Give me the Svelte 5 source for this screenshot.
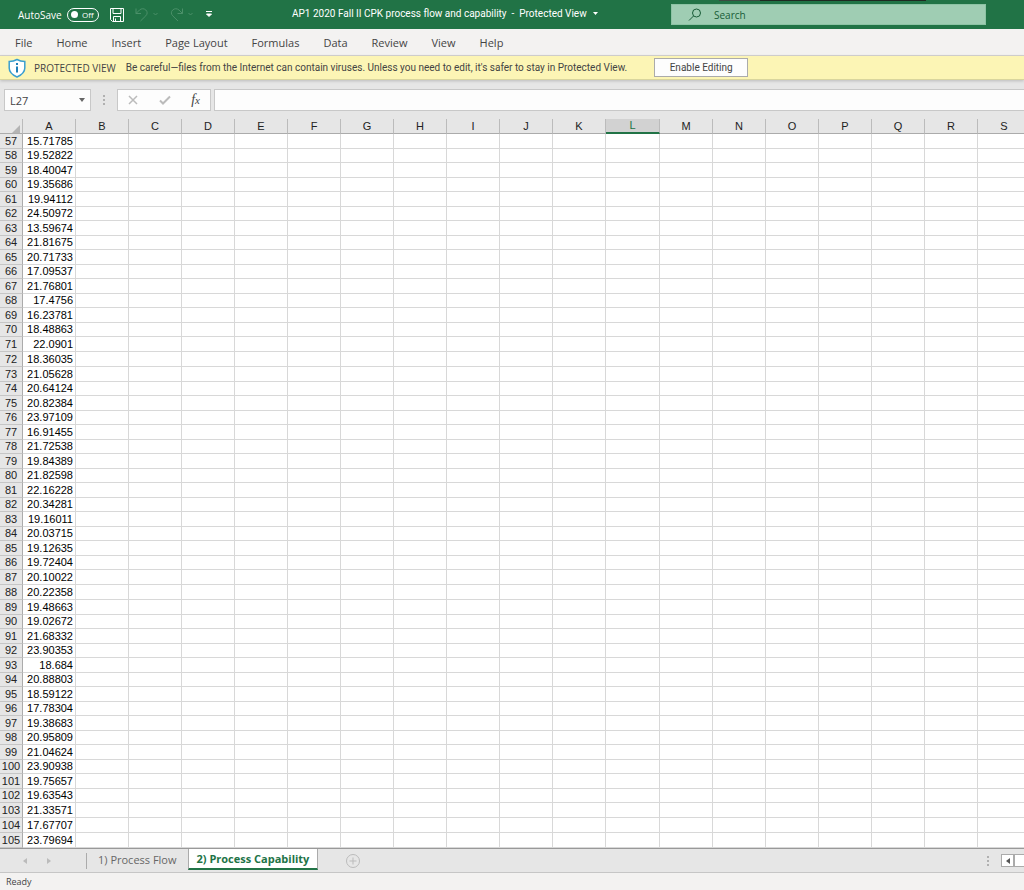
<script>
    const menus = ['File', 'Home', 'Insert', 'Page Layout', 'Formulas', 'Data', 'Review', 'View', 'Help'];
    const columns = 'ABCDEFGHIJKLMNOPQRS'.split('');
    const firstRow = 57;
    const values = [
        15.71785, 19.52822, 18.40047, 19.35686, 19.94112, 24.50972, 13.59674,
        21.81675, 20.71733, 17.09537, 21.76801, 17.4756, 16.23781, 18.48863,
        22.0901, 18.36035, 21.05628, 20.64124, 20.82384, 23.97109, 16.91455,
        21.72538, 19.84389, 21.82598, 22.16228, 20.34281, 19.16011, 20.03715,
        19.12635, 19.72404, 20.10022, 20.22358, 19.48663, 19.02672, 21.68332,
        23.90353, 18.684, 20.88803, 18.59122, 17.78304, 19.38683, 20.95809,
        21.04624, 23.90938, 19.75657, 19.63543, 21.33571, 17.67707, 23.79694
    ];
    const sheets = ['1) Process Flow', '2) Process Capability'];

    let selectedColumn = $state('L');
    let activeSheet = $state(1);
    let autoSave = $state(false);
    let cellName = $state('L27');
    let formula = $state('');
    let search = $state('');
    let showMessage = $state(true);
</script>

<div class="window">
    <header class="title-bar">
        <div class="quick-access">
            <label class="autosave">
                AutoSave
                <input type="checkbox" bind:checked={autoSave} />
                <span class="switch"><i></i>{autoSave ? 'On' : 'Off'}</span>
            </label>
            <button class="save" aria-label="Save">
                <svg width="14" height="14" viewBox="0 0 14 14">
                    <path d="M.5.5h13v13H2.5l-2-2zM3 .5v5h8v-5M3.5 13.500V8.500h7v5M5.500 13V10.500" />
                </svg>
            </button>
            <button class="faded" aria-label="Undo">
                <svg width="24" height="14" viewBox="0 0 24 14">
                    <path d="M1 .5v5h5M1 5.500L4.500 2C6.500.3 9 .3 10.800 2s1.800 4 0 5.800L5.500 13" />
                    <path d="M18.500 5l2 2 2-2" />
                </svg>
            </button>
            <button class="faded" aria-label="Redo">
                <svg width="24" height="14" viewBox="0 0 24 14">
                    <path d="M12.500.5v5h-5M12.500 5.500L9 2C7 .3 4.500.3 2.700 2s-1.800 4 0 5.800L8 13" />
                    <path d="M18.500 5l2 2 2-2" />
                </svg>
            </button>
            <button class="customize" aria-label="Customize Quick Access Toolbar">
                <svg width="8" height="7" viewBox="0 0 8 7">
                    <path d="M1 .5h6M1.500 3L4 5.500 6.500 3z" />
                </svg>
            </button>
        </div>
        <button class="doc-title">
            AP1 2020 Fall II CPK process flow and capability&nbsp; -&nbsp; Protected View
            <svg width="5" height="3" viewBox="0 0 5 3"><path d="M0 0h5L2.500 3z" /></svg>
        </button>
        <div class="search">
            <svg width="14" height="14" viewBox="0 0 14 14">
                <circle cx="8.500" cy="5" r="4" />
                <path d="M5.500 8L1 12.500" />
            </svg>
            <input type="text" placeholder="Search" aria-label="Search" bind:value={search} />
        </div>
        <span class="edge"></span>
    </header>

    <nav class="ribbon">
        {#each menus as menu}
            <button>{menu}</button>
        {/each}
    </nav>

    {#if showMessage}
        <div class="message-bar">
            <svg class="shield" width="18" height="20" viewBox="0 0 18 20">
                <path d="M9 1.500C6.500 3 4 3.500 1.200 3.500V10c0 4 3.300 7 7.800 9 4.500-2 7.800-5 7.800-9V3.500C14 3.500 11.500 3 9 1.500z" fill="#fff" stroke="#3a9fd0" stroke-width="1.500" />
                <path d="M9 8.500v6M9 5v2" stroke="#1e7fb8" stroke-width="2" />
            </svg>
            <span class="message-title">PROTECTED VIEW</span>
            <span class="message-text">Be careful—files from the Internet can contain viruses. Unless you need to edit, it's safer to stay in Protected View.</span>
            <button onclick={() => (showMessage = false)}>Enable Editing</button>
        </div>
    {/if}

    <div class="formula-bar">
        <div class="name-box">
            <input type="text" aria-label="Name Box" bind:value={cellName} />
            <svg width="6" height="4" viewBox="0 0 6 4"><path d="M0 0h6L3 4z" /></svg>
        </div>
        <span class="dots"><i></i><i></i><i></i></span>
        <div class="formula-buttons">
            <button aria-label="Cancel">
                <svg width="10" height="10" viewBox="0 0 10 10"><path d="M1 1l8 8M9 1L1 9" stroke-width="1.500" /></svg>
            </button>
            <button aria-label="Enter">
                <svg width="12" height="10" viewBox="0 0 12 10"><path d="M1 5.500L4 8.500 11 1.500" stroke-width="2" /></svg>
            </button>
            <button class="fx" aria-label="Insert Function">f<small>x</small></button>
        </div>
        <input class="formula" type="text" aria-label="Formula Bar" bind:value={formula} />
    </div>

    <main class="sheet">
        <table>
            <thead>
                <tr>
                    <th class="corner"><svg width="8" height="8" viewBox="0 0 8 8"><path d="M8 0v8H0z" /></svg></th>
                    {#each columns as column}
                        <th class:selected={column === selectedColumn} onclick={() => (selectedColumn = column)}>{column}</th>
                    {/each}
                </tr>
            </thead>
            <tbody>
                {#each values as value, i}
                    <tr>
                        <th>{firstRow + i}</th>
                        <td>{value}</td>
                        {#each columns.slice(1) as column}
                            <td></td>
                        {/each}
                    </tr>
                {/each}
            </tbody>
        </table>
    </main>

    <footer>
        <div class="sheet-bar">
            <div class="sheet-nav">
                <button aria-label="Previous sheet"><svg width="4" height="6" viewBox="0 0 4 6"><path d="M4 0v6L0 3z" /></svg></button>
                <button aria-label="Next sheet"><svg width="4" height="6" viewBox="0 0 4 6"><path d="M0 0v6l4-3z" /></svg></button>
            </div>
            {#each sheets as sheet, i}
                <button class="sheet-tab" class:active={i === activeSheet} onclick={() => (activeSheet = i)}>{sheet}</button>
            {/each}
            <button class="add" aria-label="New sheet">
                <svg width="14" height="14" viewBox="0 0 14 14">
                    <circle cx="7" cy="7" r="6.500" />
                    <path d="M7 3.500v7M3.500 7h7" />
                </svg>
            </button>
            <span class="dots"><i></i><i></i><i></i></span>
            <div class="scroll">
                <button aria-label="Scroll left"><svg width="4" height="6" viewBox="0 0 4 6"><path d="M4 0v6L0 3z" /></svg></button>
                <span class="thumb"></span>
            </div>
        </div>
        <div class="status">Ready</div>
    </footer>
</div>

<style>
    :global(body) {
        background: #e6e6e6;
    }

    .window {
        display: flex;
        flex-direction: column;
        min-height: 100vh;
        font-family: 'Open Sans', 'Noto Sans', sans-serif;
        font-size: 11px;
        color: #444;
        overflow: hidden;
    }

    button,
    input {
        font: inherit;
        color: inherit;
        background: none;
        border: 0;
        padding: 0;
        margin: 0;
        border-radius: 0;
    }

    input:focus {
        outline: none;
    }

    svg {
        display: block;
        fill: none;
        stroke: currentColor;
        flex: none;
    }

    .title-bar {
        position: relative;
        display: grid;
        grid-template-columns: 292px 1fr 315px;
        align-items: center;
        height: 29px;
        padding-right: 38px;
        background: #217346;
        color: #fff;
        font-size: 10px;
    }

    /* sliver of the window behind, along the top edge */
    .edge {
        position: absolute;
        top: 0;
        right: 98px;
        width: 207px;
        height: 1px;
        background: linear-gradient(to right, #3c4a42 20%, #202822 20%);
    }

    .quick-access {
        display: flex;
        align-items: center;
        gap: 11px;
        padding-left: 18px;
    }

    .autosave {
        display: flex;
        align-items: center;
        gap: 5px;
    }

    .autosave input {
        position: absolute;
        opacity: 0;
    }

    .switch {
        display: flex;
        align-items: center;
        justify-content: space-between;
        box-sizing: border-box;
        width: 32px;
        height: 14px;
        padding: 0 4px 0 3px;
        border: 1px solid #fff;
        border-radius: 7px;
        font-size: 8px;
    }

    .switch i {
        width: 7px;
        height: 7px;
        border-radius: 50%;
        background: #fff;
    }

    .faded {
        color: #4b9069;
    }

    .customize path {
        fill: #fff;
    }

    .doc-title {
        display: flex;
        align-items: center;
        gap: 6px;
        padding-bottom: 2px;
        font-family: Roboto, 'Open Sans', sans-serif;
        white-space: nowrap;
    }

    .doc-title path {
        fill: #fff;
        stroke: none;
    }

    .search {
        display: flex;
        align-items: center;
        gap: 12px;
        box-sizing: border-box;
        height: 21px;
        padding-left: 16px;
        border: 1px solid #8cc3a4;
        background: #9fcdb3;
        color: #185c37;
    }

    .search input {
        flex: 1;
    }

    .search input::placeholder {
        color: #185c37;
        opacity: 1;
    }

    .ribbon {
        display: flex;
        align-items: center;
        gap: 24px;
        height: 26px;
        padding-left: 15px;
        background: #f3f2f1;
        border-bottom: 1px solid #d2d0ce;
    }

    .message-bar {
        display: flex;
        align-items: center;
        box-sizing: border-box;
        height: 24px;
        padding-left: 8px;
        background: #fcf5b5;
        border-bottom: 1px solid #d9d59d;
        box-shadow: 0 1px 3px #bbb;
        font-size: 10px;
        white-space: nowrap;
    }

    .message-title {
        margin: 0 10px 0 8px;
    }

    .message-text,
    .message-bar button {
        font-family: Roboto, 'Open Sans', sans-serif;
    }

    .message-bar button {
        box-sizing: border-box;
        width: 94px;
        height: 19px;
        margin-left: 27px;
        border: 1px solid #ababab;
        background: #fdfdfd;
    }

    .formula-bar {
        display: flex;
        align-items: center;
        height: 22px;
        padding: 9px 0 8px 4px;
    }

    .name-box {
        display: flex;
        align-items: center;
        box-sizing: border-box;
        width: 87px;
        height: 22px;
        padding: 0 5px;
        border: 1px solid #c8c8c8;
        background: #fdfdfd;
    }

    .name-box input {
        flex: 1;
        min-width: 0;
    }

    .name-box path {
        fill: #666;
        stroke: none;
    }

    .dots {
        display: flex;
        flex-direction: column;
        gap: 2px;
        width: 2px;
        margin: 0 12px;
    }

    .dots i {
        height: 2px;
        background: #b0b0b0;
    }

    .formula-buttons {
        display: flex;
        align-items: center;
        justify-content: space-between;
        box-sizing: border-box;
        width: 94px;
        height: 22px;
        padding: 0 10px 0 10px;
        border: 1px solid #c8c8c8;
        background: #fdfdfd;
        color: #bbb;
    }

    .fx {
        font: italic 14px 'Liberation Serif', serif;
        color: #444;
    }

    .fx small {
        font-size: 11px;
    }

    .formula {
        flex: 1;
        box-sizing: border-box;
        min-width: 0;
        height: 22px;
        margin-left: 3px;
        padding: 0 5px;
        border: 1px solid #c8c8c8;
        border-right: 0;
        background: #fdfdfd;
    }

    .sheet {
        flex: 1;
        overflow: hidden;
        background: #fff;
    }

    table {
        width: 1031px;
        min-width: 100%;
        table-layout: fixed;
        border-collapse: separate;
        border-spacing: 0;
        font-family: 'Liberation Sans', Arial, sans-serif;
        font-size: 11px;
        line-height: 13px;
        color: #000;
    }

    th,
    td {
        box-sizing: border-box;
        padding: 0;
        font-weight: normal;
        border-right: 1px solid #d8d8d8;
        border-bottom: 1px solid #d8d8d8;
    }

    td {
        padding-right: 2px;
        text-align: right;
    }

    th {
        background: #e6e6e6;
        color: #222;
    }

    thead th {
        width: 53px;
        height: 15px;
        padding-top: 1px;
        border-right-color: #bbb;
        border-bottom-color: #ababab;
    }

    thead .selected {
        width: 54px;
        padding-top: 0;
        border-bottom: 2px solid #217346;
        background: #d2d2d2;
        color: #217346;
    }

    thead .corner {
        width: 23px;
    }

    .corner svg {
        margin: 4px 2px 0 auto;
        fill: #b4b4b4;
        stroke: none;
    }

    tbody th {
        border-right-color: #ababab;
        border-bottom-color: #c6c6c6;
    }

    tbody tr {
        height: 15px;
    }

    tbody tr:nth-child(even) {
        height: 14px;
    }

    tbody tr:nth-child(16n) {
        height: 15px;
    }

    .sheet-bar {
        display: flex;
        align-items: center;
        height: 23px;
        background: #e6e6e6;
        border-top: 1px solid #999;
    }

    .sheet-nav {
        display: flex;
        gap: 20px;
        box-sizing: border-box;
        width: 87px;
        padding: 5px 0 5px 23px;
        border-right: 1px solid #ababab;
        color: #bbb;
    }

    .sheet-nav path,
    .scroll path {
        fill: currentColor;
        stroke: none;
    }

    .sheet-tab {
        align-self: flex-start;
        box-sizing: border-box;
        height: 21px;
        padding: 0 11px;
        color: #666;
    }

    .sheet-tab.active {
        padding: 0 8px;
        border: 1px solid #ababab;
        border-top: 0;
        border-bottom: 2px solid #217346;
        background: #fff;
        color: #217346;
        font-weight: bold;
    }

    .add {
        margin: 0 auto 0 28px;
        color: #bbb;
    }

    .scroll {
        display: flex;
        width: 23px;
        height: 13px;
    }

    .scroll button {
        display: flex;
        align-items: center;
        justify-content: center;
        box-sizing: border-box;
        width: 13px;
        border: 1px solid #ababab;
        background: #fff;
        color: #555;
    }

    .thumb {
        flex: 1;
        border: 1px solid #ababab;
        border-width: 1px 0 1px 1px;
        background: #fff;
    }

    .status {
        height: 17px;
        padding-left: 6px;
        border-top: 1px solid #c6c6c6;
        background: #f3f2f1;
        font-size: 9px;
        line-height: 18px;
    }
</style>
